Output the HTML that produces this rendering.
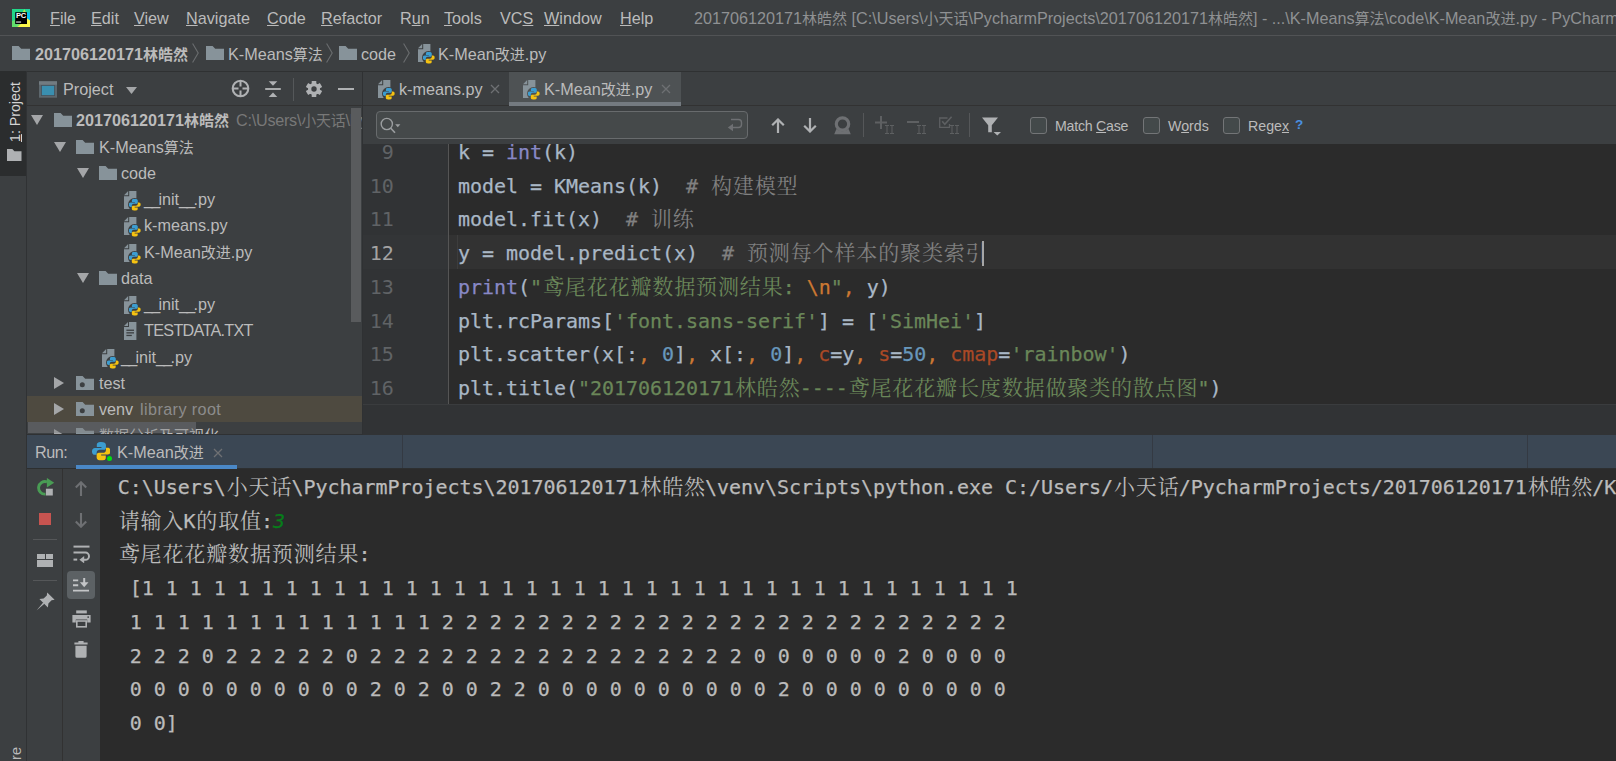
<!DOCTYPE html>
<html lang="zh">
<head>
<meta charset="utf-8">
<title>PyCharm</title>
<style>
*{box-sizing:border-box;margin:0;padding:0}
html,body{width:1616px;height:761px;overflow:hidden;background:#3c3f41}
body{position:relative;font-family:"Liberation Sans","Noto Sans CJK SC",sans-serif;color:#bbbbbb;font-size:15px}
.abs{position:absolute}
.ui{font-family:"Liberation Sans","Noto Sans CJK SC",sans-serif}
.mono{font-family:"DejaVu Sans Mono","Liberation Mono","Noto Serif CJK SC",monospace;letter-spacing:-0.041px;-webkit-text-stroke:0.25px}
.nw{white-space:nowrap}
.c{font-size:15px}
.us{letter-spacing:-1.8px}
.cj{font-size:21px;letter-spacing:0.87px;line-height:1px;position:relative;left:0.9px;-webkit-text-stroke:0}
u{text-decoration:underline;text-underline-offset:1.3px;text-decoration-thickness:1.1px}

/* menu bar */
#menubar{left:0;top:0;width:1616px;height:35px;background:#3c3f41}
#menubar .mi{position:absolute;top:7.8px;font-size:16.2px;color:#bbbbbb;line-height:20px;white-space:nowrap}
#menubar .title{position:absolute;top:7.8px;left:694px;font-size:16.2px;color:#8f9193;line-height:20px;white-space:nowrap}
.hline{position:absolute;left:0;width:1616px;height:1px;background:#515355}

/* nav bar */
#navbar{left:0;top:36px;width:1616px;height:34px;background:#3c3f41}
#navbar .t{position:absolute;top:7.5px;font-size:16.2px;line-height:20px;color:#bbbbbb;white-space:nowrap}

/* left stripe */
#stripe{left:0;top:71px;width:27px;height:690px;background:#3c3f41}
#stripe .tab{position:absolute;left:0;top:0;width:27px;height:104.7px;background:#2b2d2e}

/* project panel */
#proj{left:27px;top:71px;width:335px;height:364px;background:#3c3f41;overflow:hidden}
.row{position:absolute;left:0;width:335px;height:26px;line-height:26px;font-size:16.2px;white-space:nowrap;color:#bbbbbb}
.row span.t{position:absolute;top:0.3px}

/* editor */
#editor{left:363px;top:71px;width:1253px;height:364px;background:#2b2b2b;overflow:hidden}
#tabs{left:0;top:0;width:1253px;height:35px;background:#3c3f41}
#search{left:0;top:35px;width:1253px;height:38px;background:#3c3f41}
.cl{position:absolute;left:95px;height:34px;line-height:34px;font-size:20px;white-space:pre;color:#a9b7c6}
.ln{-webkit-text-stroke:0;position:absolute;left:0;width:30.7px;text-align:right;height:34px;line-height:34px;font-size:20px;color:#606366}
.cm{color:#808080}.st{color:#6a8759}.kw{color:#cc7832}.nu{color:#6897bb}.bi{color:#8888c6}.pa{color:#aa4926}

/* run panel */
#run{left:27px;top:436px;width:1589px;height:325px;background:#2b2b2b}
#runhead{left:0;top:-1px;width:1589px;height:33px;padding-top:1px;background:#3b4754}
.ol{position:absolute;left:90.8px;height:34px;line-height:34px;font-size:20px;white-space:pre;color:#bbbbbb}
</style>
</head>
<body>

<svg width="0" height="0" style="position:absolute">
  <defs>
    <symbol id="folder" viewBox="0 0 18 14"><path d="M0,14V0H6.6L9.2,2.7H18V14Z" fill="#87939a"/></symbol>
    <symbol id="folderdot" viewBox="0 0 18 14"><path d="M0,14V0H6.6L9.2,2.7H18V14Z" fill="#87939a"/><circle cx="6.3" cy="8.7" r="2.5" fill="#3c3f41"/></symbol>
    <symbol id="pylogo" viewBox="0 0 12 12">
      <path d="M5.9,0C3.6,0 3.1,0.9 3.1,2V3.3H6.1V3.9H1.9C0.7,3.9 0,4.8 0,6.1C0,7.4 0.7,8.3 1.9,8.3H3V6.9C3,5.7 3.9,5 5,5H7.6C8.5,5 9,4.4 9,3.5V2C9,0.8 8,0 5.9,0Z" fill="#3c9dd0"/>
      <path d="M6.1,12C8.4,12 8.9,11.1 8.9,10V8.7H5.9V8.1H10.1C11.3,8.1 12,7.2 12,5.9C12,4.6 11.3,3.7 10.1,3.7H9V5.1C9,6.3 8.1,7 7,7H4.4C3.5,7 3,7.6 3,8.5V10C3,11.2 4,12 6.1,12Z" fill="#f5c211"/>
    </symbol>
    <symbol id="pyfile" viewBox="0 0 17 20">
      <path d="M5.2,0H12.4V18H0V5.2H5.2Z" fill="#87939a"/>
      <path d="M0,4.2L4.2,0V4.2Z" fill="#87939a"/>
      <circle cx="10.6" cy="13.6" r="6.6" fill="#3c3f41"/>
      <use href="#pylogo" x="4.8" y="7.7" width="12" height="12"/>
    </symbol>
    <symbol id="pyfile2" viewBox="0 0 17 20">
      <path d="M5.2,0H12.4V18H0V5.2H5.2Z" fill="#87939a"/>
      <path d="M0,4.2L4.2,0V4.2Z" fill="#87939a"/>
      <circle cx="10.6" cy="13.6" r="6.6" fill="#4e5254"/>
      <use href="#pylogo" x="4.8" y="7.7" width="12" height="12"/>
    </symbol>
    <symbol id="txtfile" viewBox="0 0 14 18">
      <path d="M5,0H12.4V18H0V5H5Z" fill="#87939a"/>
      <path d="M0,4L4,0V4Z" fill="#87939a"/>
      <rect x="2.4" y="7.6" width="7.6" height="1.3" fill="#3c3f41"/>
      <rect x="2.4" y="10.2" width="7.6" height="1.3" fill="#3c3f41"/>
      <rect x="2.4" y="12.8" width="5.4" height="1.3" fill="#3c3f41"/>
    </symbol>
    <symbol id="arrd" viewBox="0 0 12 10"><path d="M0,0H12L6,10Z" fill="#a4a6a8"/></symbol>
    <symbol id="arrr" viewBox="0 0 10 12"><path d="M0,0V12L10,6Z" fill="#a4a6a8"/></symbol>
    <symbol id="chev" viewBox="0 0 7 20"><path d="M0.6,0.5L6.2,10L0.6,19.5" fill="none" stroke="#6a6d6f" stroke-width="1.1"/></symbol>
    <symbol id="xx" viewBox="0 0 10 10"><path d="M1,1L9,9M9,1L1,9" stroke="#6e7073" stroke-width="1.3" fill="none"/></symbol>
  </defs>
</svg>

<!-- MENU BAR -->
<div id="menubar" class="abs ui">
  <svg class="abs" style="left:11.9px;top:8.9px" width="18.3" height="18.3" viewBox="0 0 18.3 18.3">
    <defs><linearGradient id="pcg" x1="0" y1="0" x2="1" y2="1"><stop offset="0" stop-color="#21d789"/><stop offset="0.45" stop-color="#21d789"/><stop offset="0.75" stop-color="#c9ef4e"/><stop offset="1" stop-color="#fcf84a"/></linearGradient></defs>
    <rect width="18.3" height="18.3" fill="url(#pcg)"/>
    <polygon points="13.8,0 18.3,0 18.3,4.5 14.6,4" fill="#1fd3a0"/>
    <polygon points="12.3,0.2 10.6,3.2 14,3.2" fill="#b8ee50"/>
    <polygon points="14.4,3.6 18.3,3.6 18.3,12.4 14.4,9.3" fill="#07c3f2"/>
    <polygon points="18.3,11.8 18.3,18.3 5.5,18.3 14.8,9.2" fill="#fcf84a"/>
    <polygon points="0,12 3.2,11 3.2,15.1 5.5,18.3 0,18.3" fill="#62df6b"/>
    <rect x="3.2" y="3.2" width="11.8" height="11.8" fill="#000"/>
    <text x="3.9" y="9.2" font-family="Liberation Sans, sans-serif" font-weight="bold" font-size="7.6" letter-spacing="-0.3" fill="#fff">PC</text>
    <rect x="4.1" y="12.2" width="5" height="1.7" fill="#9a9a9a"/>
  </svg>
  <span class="mi" style="left:50px"><u>F</u>ile</span>
  <span class="mi" style="left:91px"><u>E</u>dit</span>
  <span class="mi" style="left:134px"><u>V</u>iew</span>
  <span class="mi" style="left:186px"><u>N</u>avigate</span>
  <span class="mi" style="left:267px"><u>C</u>ode</span>
  <span class="mi" style="left:321px"><u>R</u>efactor</span>
  <span class="mi" style="left:400px">R<u>u</u>n</span>
  <span class="mi" style="left:444px"><u>T</u>ools</span>
  <span class="mi" style="left:500px">VC<u>S</u></span>
  <span class="mi" style="left:544px"><u>W</u>indow</span>
  <span class="mi" style="left:620px"><u>H</u>elp</span>
  <span class="title">201706120171<span class="c">林皓然</span> [C:\Users\<span class="c">小天话</span>\PycharmProjects\201706120171<span class="c">林皓然</span>] - ...\K-Means<span class="c">算法</span>\code\K-Mean<span class="c">改进</span>.py - PyCharm</span>
</div>
<div class="hline" style="top:35px"></div>

<!-- NAV BAR -->
<div id="navbar" class="abs ui">
  <svg class="abs" style="left:12px;top:10px" width="18" height="14"><use href="#folder"/></svg>
  <span class="t" style="left:35px;font-weight:bold">201706120171<span class="c">林皓然</span></span>
  <svg class="abs" style="left:192px;top:7px" width="7" height="20"><use href="#chev"/></svg>
  <svg class="abs" style="left:206px;top:10px" width="18" height="14"><use href="#folder"/></svg>
  <span class="t" style="left:228px">K-Means<span class="c">算法</span></span>
  <svg class="abs" style="left:326px;top:7px" width="7" height="20"><use href="#chev"/></svg>
  <svg class="abs" style="left:339px;top:10px" width="18" height="14"><use href="#folder"/></svg>
  <span class="t" style="left:361px">code</span>
  <svg class="abs" style="left:403px;top:7px" width="7" height="20"><use href="#chev"/></svg>
  <svg class="abs" style="left:417.8px;top:7.8px" width="17" height="20"><use href="#pyfile"/></svg>
  <span class="t" style="left:438px">K-Mean<span class="c">改进</span>.py</span>
</div>
<div class="hline" style="top:70.6px;left:27px;background:#2f3132;z-index:5"></div>

<!-- LEFT STRIPE -->
<div id="stripe" class="abs ui">
  <div class="tab"></div>
  <div class="abs nw" style="left:5px;top:71px;width:70px;height:20px;line-height:20px;font-size:14.2px;color:#d4d4d4;transform-origin:0 0;transform:rotate(-90deg)"><u>1</u>: Project</div>
  <svg class="abs" style="left:7.2px;top:77.5px" width="14.5" height="12.3" viewBox="0 0 18 14" preserveAspectRatio="none"><path d="M0,14V0H6.6L9.2,2.7H18V14Z" fill="#afb1b3"/></svg>
  <div class="abs nw" style="left:6px;top:751px;width:78px;height:20px;line-height:20px;font-size:14.5px;color:#bbbbbb;transform-origin:0 0;transform:rotate(-90deg)">2: Structure</div>
</div>

<div class="abs" style="left:26px;top:71px;width:1.2px;height:690px;background:#303234;z-index:4"></div>
<!-- PROJECT PANEL -->
<div id="proj" class="abs ui">
  <!-- header -->
  <div class="abs" style="left:0;top:0;width:335px;height:35px;background:#3c3f41;border-bottom:1px solid #323232"></div>
  <svg class="abs" style="left:12px;top:10px" width="18" height="17" viewBox="0 0 18 17"><rect x="0" y="0.3" width="18" height="16.4" fill="#5d676d"/><rect x="0" y="0.3" width="18" height="3.4" fill="#727b81"/><rect x="2.4" y="4.4" width="13.2" height="10.2" fill="#3a8fb0" stroke="#46525a" stroke-width="0.8"/></svg>
  <span class="abs nw" style="left:36px;top:8.3px;font-size:16.2px;line-height:20px;color:#bbbbbb">Project</span>
  <svg class="abs" style="left:98.5px;top:16px" width="11" height="7" viewBox="0 0 11 7"><path d="M0,0H11L5.5,7Z" fill="#a4a6a8"/></svg>
  <!-- locate -->
  <svg class="abs" style="left:203.55px;top:8.30px" width="19" height="19" viewBox="-9.5 -9.5 19 19"><circle r="7.8" fill="none" stroke="#afb1b3" stroke-width="2.1"/><path d="M0,-8V-2M0,2V8M-8,0H-2M2,0H8" stroke="#afb1b3" stroke-width="2"/></svg>
  <!-- collapse all -->
  <svg class="abs" style="left:238.00px;top:8.90px" width="16" height="18" viewBox="-8 -9 16 18"><path d="M-7.8,0H7.8" stroke="#afb1b3" stroke-width="1.9"/><path d="M-4.3,-7.7H4.3L0,-3.3Z" fill="#afb1b3"/><path d="M-4.3,7.9H4.3L0,3.5Z" fill="#afb1b3"/></svg>
  <div class="abs" style="left:266px;top:6.5px;width:1px;height:23.5px;background:#55585a"></div>
  <!-- gear -->
  <svg class="abs" style="left:278.00px;top:8.90px" width="18" height="18" viewBox="-9 -9 18 18"><g fill="#afb1b3"><circle r="6"/><rect x="-2.3" y="-8.1" width="4.6" height="5" rx="0.5" transform="rotate(0)"/><rect x="-2.3" y="-8.1" width="4.6" height="5" rx="0.5" transform="rotate(60)"/><rect x="-2.3" y="-8.1" width="4.6" height="5" rx="0.5" transform="rotate(120)"/><rect x="-2.3" y="-8.1" width="4.6" height="5" rx="0.5" transform="rotate(180)"/><rect x="-2.3" y="-8.1" width="4.6" height="5" rx="0.5" transform="rotate(240)"/><rect x="-2.3" y="-8.1" width="4.6" height="5" rx="0.5" transform="rotate(300)"/></g><circle r="2.7" fill="#3c3f41"/></svg>
  <!-- minimize -->
  <div class="abs" style="left:311.4px;top:17px;width:15.3px;height:1.9px;background:#afb1b3"></div>
  <!-- tree -->
  <div class="abs" style="left:0;top:36px;width:335px;height:328px;overflow:hidden">
  <div class="abs" style="left:0;top:-36px;width:335px;height:400px">
<div class="row" style="top:36px"><svg class="abs" style="left:4px;top:8px" width="12" height="10"><use href="#arrd"/></svg><svg class="abs" style="left:27px;top:6px" width="18" height="14"><use href="#folder"/></svg><span class="t" style="left:49px;font-weight:bold">201706120171<span class="c">林皓然</span></span><span class="t" style="left:209px;color:#787878;letter-spacing:-0.25px">C:\Users\<span class="c">小天话</span>\PycharmProjects\201706120171<span class="c">林皓然</span></span></div>
<div class="row" style="top:63px"><svg class="abs" style="left:27px;top:8px" width="12" height="10"><use href="#arrd"/></svg><svg class="abs" style="left:49px;top:6px" width="18" height="14"><use href="#folder"/></svg><span class="t" style="left:72px">K-Means<span class="c">算法</span></span></div>
<div class="row" style="top:89px"><svg class="abs" style="left:50px;top:8px" width="12" height="10"><use href="#arrd"/></svg><svg class="abs" style="left:72px;top:6px" width="18" height="14"><use href="#folder"/></svg><span class="t" style="left:94px">code</span></div>
<div class="row" style="top:115px"><svg class="abs" style="left:96.8px;top:4.8px" width="17" height="20"><use href="#pyfile"/></svg><span class="t" style="left:117px"><span class="us">__</span>init<span class="us">__</span>.py</span></div>
<div class="row" style="top:141px"><svg class="abs" style="left:96.8px;top:4.8px" width="17" height="20"><use href="#pyfile"/></svg><span class="t" style="left:117px">k-means.py</span></div>
<div class="row" style="top:168px"><svg class="abs" style="left:96.8px;top:4.8px" width="17" height="20"><use href="#pyfile"/></svg><span class="t" style="left:117px">K-Mean<span class="c">改进</span>.py</span></div>
<div class="row" style="top:194px"><svg class="abs" style="left:50px;top:8px" width="12" height="10"><use href="#arrd"/></svg><svg class="abs" style="left:72px;top:6px" width="18" height="14"><use href="#folder"/></svg><span class="t" style="left:94px">data</span></div>
<div class="row" style="top:220px"><svg class="abs" style="left:96.8px;top:4.8px" width="17" height="20"><use href="#pyfile"/></svg><span class="t" style="left:117px"><span class="us">__</span>init<span class="us">__</span>.py</span></div>
<div class="row" style="top:246px"><svg class="abs" style="left:97px;top:5px" width="14" height="18"><use href="#txtfile"/></svg><span class="t" style="left:117px;letter-spacing:-0.7px">TESTDATA.TXT</span></div>
<div class="row" style="top:273px"><svg class="abs" style="left:74.8px;top:4.8px" width="17" height="20"><use href="#pyfile"/></svg><span class="t" style="left:94px"><span class="us">__</span>init<span class="us">__</span>.py</span></div>
<div class="row" style="top:299px"><svg class="abs" style="left:27px;top:7px" width="10" height="12"><use href="#arrr"/></svg><svg class="abs" style="left:49px;top:6px" width="18" height="14"><use href="#folderdot"/></svg><span class="t" style="left:72px">test</span></div>
<div class="row" style="top:325px;background:#4e4a40"><svg class="abs" style="left:27px;top:7px" width="10" height="12"><use href="#arrr"/></svg><svg class="abs" style="left:49px;top:6px" width="18" height="14"><use href="#folderdot"/></svg><span class="t" style="left:72px">venv</span><span class="t" style="left:113px;color:#8c8c8c;letter-spacing:0.4px">library root</span></div>
<div class="row" style="top:351px"><svg class="abs" style="left:27px;top:7px" width="10" height="12"><use href="#arrr"/></svg><svg class="abs" style="left:49px;top:6px" width="18" height="14"><use href="#folder"/></svg><span class="t" style="left:72px"><span class="c">数据分析及可视化</span></span></div>
  </div>
  <!-- h scrollbar -->
    <div class="abs" style="left:1px;top:315px;width:168px;height:11px;background:rgba(128,130,132,0.43)"></div>
  <!-- v scrollbar -->
  <div class="abs" style="left:324px;top:1px;width:10px;height:214px;background:#595b5d"></div>
  </div>
</div>

<!-- EDITOR -->
<div id="editor" class="abs">
  <div class="abs" style="left:0;top:73px;width:86px;height:291px;background:#313335"></div>
  <div class="abs" style="left:86px;top:164px;width:1167px;height:33.7px;background:#323232"></div>
  <div class="abs" style="left:0;top:164px;width:86px;height:33.7px;background:#333537"></div>
  <div class="abs" style="left:94px;top:164px;width:1px;height:33.7px;background:#3d3d3d"></div>
  <div class="abs" style="left:85px;top:73px;width:1px;height:262px;background:#555555"></div>
  <div class="ln mono" style="top:64.00px;color:#606366">9</div>
  <div class="cl mono" style="top:64.00px;left:47px">    k = <span class="bi">int</span>(k)</div>
  <div class="ln mono" style="top:97.71px;color:#606366">10</div>
  <div class="cl mono" style="top:97.71px;left:47px">    model = KMeans(k)  <span class="cm"># <span class="cj">构建模型</span></span></div>
  <div class="ln mono" style="top:131.42px;color:#606366">11</div>
  <div class="cl mono" style="top:131.42px;left:47px">    model.fit(x)  <span class="cm"># <span class="cj">训练</span></span></div>
  <div class="ln mono" style="top:165.13px;color:#a4a3a3">12</div>
  <div class="cl mono" style="top:165.13px;left:47px">    y = model.predict(x)  <span class="cm"># <span class="cj">预测每个样本的聚类索引</span></span></div>
  <div class="ln mono" style="top:198.84px;color:#606366">13</div>
  <div class="cl mono" style="top:198.84px;left:47px">    <span class="bi">print</span>(<span class="st">"<span class="cj">鸢尾花花瓣数据预测结果</span>: </span><span class="kw">\n</span><span class="st">"</span><span class="kw">,</span> y)</div>
  <div class="ln mono" style="top:232.55px;color:#606366">14</div>
  <div class="cl mono" style="top:232.55px;left:47px">    plt.rcParams[<span class="st">'font.sans-serif'</span>] = [<span class="st">'SimHei'</span>]</div>
  <div class="ln mono" style="top:266.26px;color:#606366">15</div>
  <div class="cl mono" style="top:266.26px;left:47px">    plt.scatter(x[:<span class="kw">,</span> <span class="nu">0</span>]<span class="kw">,</span> x[:<span class="kw">,</span> <span class="nu">0</span>]<span class="kw">,</span> <span class="pa">c</span>=y<span class="kw">,</span> <span class="pa">s</span>=<span class="nu">50</span><span class="kw">,</span> <span class="pa">cmap</span>=<span class="st">'rainbow'</span>)</div>
  <div class="ln mono" style="top:299.97px;color:#606366">16</div>
  <div class="cl mono" style="top:299.97px;left:47px">    plt.title(<span class="st">"201706120171<span class="cj">林皓然</span>----<span class="cj">鸢尾花花瓣长度数据做聚类的散点图</span>"</span>)</div>
  <div class="abs" style="left:619.3px;top:170.13px;width:1.4px;height:25px;background:#a6a6a6"></div>
  <div class="abs" style="left:0;top:332.7px;width:1253px;height:32px;background:#313335;border-top:1px solid #3a3c3e"></div>
  <div id="tabs" class="abs ui">
    <div class="abs" style="left:0;top:34px;width:1253px;height:1px;background:#323232"></div>
    <svg class="abs" style="left:14.8px;top:8.8px" width="17" height="20"><use href="#pyfile"/></svg>
    <span class="abs nw" style="left:36px;top:8px;font-size:16.2px;line-height:20px;color:#bbbbbb">k-means.py</span>
    <svg class="abs" style="left:127px;top:13px" width="10" height="10"><use href="#xx"/></svg>
    <div class="abs" style="left:146px;top:1px;width:172px;height:33px;background:#4e5254"></div>
    <div class="abs" style="left:146px;top:31px;width:172px;height:4px;background:#747a80"></div>
    <svg class="abs" style="left:159.8px;top:8.8px" width="17" height="20"><use href="#pyfile2"/></svg>
    <span class="abs nw" style="left:181px;top:8px;font-size:16.2px;line-height:20px;color:#bbbbbb">K-Mean<span class="c">改进</span>.py</span>
    <svg class="abs" style="left:298px;top:13px" width="10" height="10"><use href="#xx"/></svg>
  </div>
  <div id="search" class="abs ui">
    <div class="abs" style="left:13px;top:5px;width:372px;height:28px;border:1.5px solid #686b6d;border-radius:4px;background:#45494a"></div>
    <svg class="abs" style="left:17px;top:11px" width="21" height="18" viewBox="0 0 21 18"><circle cx="6.8" cy="7" r="5.6" fill="none" stroke="#9b9ea0" stroke-width="1.4"/><path d="M10.8,11.2L15,15.8" stroke="#9b9ea0" stroke-width="1.6"/><path d="M15.2,7.3H20.4L17.8,10.2Z" fill="#9b9ea0"/></svg>
    <svg class="abs" style="left:364px;top:12px" width="16" height="15" viewBox="0 0 16 15"><path d="M4,1.5H11.5A3,3 0 0 1 14.5,4.5V6.5A3,3 0 0 1 11.5,9.5H5" fill="none" stroke="#6e7073" stroke-width="1.4"/><path d="M0.8,9.5L6,5.8V13.2Z" fill="#6e7073"/></svg>
    <!-- up / down -->
    <svg class="abs" style="left:408px;top:12px" width="14" height="15" viewBox="0 0 14 15"><path d="M7,1.5V15M1.2,7.3L7,1.5L12.8,7.3" fill="none" stroke="#afb1b3" stroke-width="2.2"/></svg>
    <svg class="abs" style="left:440px;top:12px" width="14" height="15" viewBox="0 0 14 15"><path d="M7,0V13.5M1.2,7.7L7,13.5L12.8,7.7" fill="none" stroke="#afb1b3" stroke-width="2.2"/></svg>
    <!-- find all (disabled) -->
    <svg class="abs" style="left:470px;top:10px" width="19" height="19" viewBox="0 0 19 19"><circle cx="9.5" cy="8" r="6.2" fill="none" stroke="#6e7073" stroke-width="3.2"/><path d="M3.4,13L1.2,18.3H17.8L15.6,13Q9.5,17.5 3.4,13Z" fill="#6e7073"/></svg>
    <div class="abs" style="left:500px;top:7px;width:1px;height:24px;background:#555759"></div>
    <!-- +II -->
    <svg class="abs" style="left:512px;top:10px" width="12" height="13" viewBox="0 0 12 13"><path d="M6,0V13M0,6.5H12" stroke="#5e6062" stroke-width="2" fill="none"/></svg>
    <svg class="abs" style="left:522px;top:19px" width="9" height="9" viewBox="0 0 9 9"><path d="M0,0.5H4M0,8.5H4M2,0.5V8.5M5,0.5H9M5,8.5H9M7,0.5V8.5" stroke="#5e6062" stroke-width="1" fill="none"/></svg>
    <!-- -II -->
    <div class="abs" style="left:544px;top:15px;width:12px;height:2px;background:#5e6062"></div>
    <svg class="abs" style="left:554px;top:19px" width="9" height="9" viewBox="0 0 9 9"><path d="M0,0.5H4M0,8.5H4M2,0.5V8.5M5,0.5H9M5,8.5H9M7,0.5V8.5" stroke="#5e6062" stroke-width="1" fill="none"/></svg>
    <!-- check II -->
    <svg class="abs" style="left:576px;top:10px" width="14" height="12" viewBox="0 0 14 12"><path d="M8.5,2H0.7V11.3H10.5V8" fill="none" stroke="#5e6062" stroke-width="1.3"/><path d="M3.2,5.2L5.8,8.2L12.6,0.8" fill="none" stroke="#5e6062" stroke-width="1.6"/></svg>
    <svg class="abs" style="left:587px;top:19px" width="9" height="9" viewBox="0 0 9 9"><path d="M0,0.5H4M0,8.5H4M2,0.5V8.5M5,0.5H9M5,8.5H9M7,0.5V8.5" stroke="#5e6062" stroke-width="1" fill="none"/></svg>
    <div class="abs" style="left:606px;top:7px;width:1px;height:24px;background:#555759"></div>
    <!-- filter -->
    <svg class="abs" style="left:619px;top:11px" width="20" height="19" viewBox="0 0 20 19"><path d="M0,0.5H16L9.8,8.3V15.2H6.2V8.3Z" fill="#afb1b3"/><path d="M11.6,15H19L15.3,18.6Z" fill="#afb1b3"/></svg>
    <div class="abs" style="left:667px;top:11px;width:17px;height:17px;border:1px solid #737577;border-radius:3px;background:#43494a"></div>
    <span class="abs nw" style="left:692px;top:10px;font-size:14.2px;letter-spacing:-0.25px;line-height:20px;color:#bbbbbb">Match <u>C</u>ase</span>
    <div class="abs" style="left:780px;top:11px;width:17px;height:17px;border:1px solid #737577;border-radius:3px;background:#43494a"></div>
    <span class="abs nw" style="left:805px;top:10px;font-size:14.2px;line-height:20px;color:#bbbbbb">W<u>o</u>rds</span>
    <div class="abs" style="left:860px;top:11px;width:17px;height:17px;border:1px solid #737577;border-radius:3px;background:#43494a"></div>
    <span class="abs nw" style="left:885px;top:10px;font-size:14.2px;line-height:20px;color:#bbbbbb">Rege<u>x</u></span>
    <span class="abs nw" style="left:932px;top:9px;font-size:13.5px;line-height:20px;color:#4a8fe0;font-weight:bold">?</span>
  </div>
</div>

<div class="abs" style="left:27px;top:433.5px;width:336px;height:1.2px;background:#2f3133"></div>
<div class="abs" style="left:362px;top:71px;width:1.3px;height:364px;background:#2f3133"></div>
<!-- RUN PANEL -->
<div id="run" class="abs">
  <div id="runhead" class="abs ui">
    <span class="abs nw" style="left:8px;top:7.1px;font-size:16.2px;letter-spacing:-0.5px;line-height:20px;color:#bbbbbb">Run:</span>
    <svg class="abs" style="left:64.6px;top:7.0px" width="18.6" height="18.6" viewBox="0 0 12 12"><use href="#pylogo" width="12" height="12"/></svg>
    <div class="abs" style="left:79px;top:20.0px;width:7px;height:7px;border-radius:50%;background:#3b4754"></div>
    <div class="abs" style="left:80px;top:21.0px;width:5px;height:5px;border-radius:50%;background:#00e010"></div>
    <span class="abs nw" style="left:90px;top:7.1px;font-size:16.2px;line-height:20px;color:#bbbbbb">K-Mean<span class="c">改进</span></span>
    <svg class="abs" style="left:186px;top:13.0px" width="10" height="10"><use href="#xx"/></svg>
    <div class="abs" style="left:0;top:32.7px;width:1589px;height:1px;background:#2d2f30;z-index:3"></div>
    <div class="abs" style="left:49px;top:29.9px;width:161px;height:3.7px;background:#4a88c7;z-index:4"></div>
    <div class="abs" style="left:375px;top:0;width:1px;height:33px;background:#343a43"></div>
    <div class="abs" style="left:1125px;top:0;width:1px;height:33px;background:#343a43"></div>
    <div class="abs" style="left:1500px;top:0;width:1px;height:33px;background:#343a43"></div>
  </div>
  <div class="abs" style="left:0;top:32px;width:73px;height:293px;background:#3c3f41"></div>
  <div class="abs" style="left:35px;top:32px;width:1px;height:293px;background:#323232"></div>
  <!-- rerun -->
  <svg class="abs" style="left:10px;top:41.5px" width="18" height="18" viewBox="0 0 18 18"><path d="M10.05,3.9A6.3,6.3 0 1 0 8.45,16.1" fill="none" stroke="#499c54" stroke-width="2.9"/><path d="M9.85,-0.1L17.2,4.7L9.85,9.5Z" fill="#499c54"/><rect x="8.9" y="10.7" width="6.9" height="6.8" fill="#afb1b3"/></svg>
  <!-- stop -->
  <div class="abs" style="left:11.8px;top:77.2px;width:12.5px;height:12px;background:#c75450"></div>
  <div class="abs" style="left:6.4px;top:103px;width:23.4px;height:1px;background:#555759"></div>
  <!-- layout -->
  <div class="abs" style="left:10.3px;top:117.6px;width:7.3px;height:5.8px;background:#afb1b3"></div>
  <div class="abs" style="left:18.5px;top:117.6px;width:7.3px;height:5.8px;background:#afb1b3"></div>
  <div class="abs" style="left:10.3px;top:124.4px;width:15.5px;height:6.2px;background:#afb1b3"></div>
  <div class="abs" style="left:6.4px;top:144px;width:23.4px;height:1px;background:#555759"></div>
  <!-- pin -->
  <svg class="abs" style="left:8.5px;top:156px" width="19" height="19" viewBox="0 0 19 19"><path d="M11.2,0.4L18.6,7.8L15.6,8.2L12.4,11.4L11.9,15.6L3.4,7.1L7.6,6.6L10.8,3.4Z" fill="#afb1b3"/><path d="M0.5,18.5L7.2,10.6L8.4,11.8Z" fill="#afb1b3"/></svg>
  <!-- up / down disabled -->
  <svg class="abs" style="left:48px;top:45px" width="12" height="15" viewBox="0 0 12 15"><path d="M6,1.3V15M0.8,6.5L6,1.3L11.2,6.5" fill="none" stroke="#6e7073" stroke-width="2.1"/></svg>
  <svg class="abs" style="left:48px;top:76.5px" width="12" height="15" viewBox="0 0 12 15"><path d="M6,0V13.7M0.8,8.5L6,13.7L11.2,8.5" fill="none" stroke="#6e7073" stroke-width="2.1"/></svg>
  <!-- soft wrap -->
  <svg class="abs" style="left:45.5px;top:109px" width="18" height="18" viewBox="0 0 18 18"><path d="M0.5,1.6H16.5" stroke="#afb1b3" stroke-width="2" fill="none"/><path d="M0.5,7.6H12.4A3.6,3.6 0 0 1 12.4,14.8H10.5" stroke="#afb1b3" stroke-width="2" fill="none"/><path d="M6.4,14.8L11.2,11V18.4Z" fill="#afb1b3"/><path d="M0.5,14.6H4.2" stroke="#afb1b3" stroke-width="2" fill="none"/></svg>
  <!-- scroll to end (selected) -->
  <div class="abs" style="left:40.3px;top:135px;width:27.6px;height:28px;border-radius:4px;background:#5c6164"></div>
  <svg class="abs" style="left:46px;top:142px" width="16" height="14" viewBox="0 0 16 14"><path d="M0,2.4H5.2M0,7.2H5.2M0,12.6H16" stroke="#c3c5c7" stroke-width="1.9" fill="none"/><path d="M11.2,0V5" stroke="#c3c5c7" stroke-width="2" fill="none"/><path d="M6.9,4.2H15.5L11.2,9.2Z" fill="#c3c5c7"/></svg>
  <!-- print -->
  <svg class="abs" style="left:44.5px;top:173.5px" width="19" height="18" viewBox="0 0 19 18"><rect x="4.2" y="0.4" width="10.6" height="3" fill="#afb1b3"/><path d="M0.4,5H18.6V12.6H15.2V9.6H3.8V12.6H0.4Z" fill="#afb1b3"/><rect x="4.8" y="11" width="9.4" height="5.8" fill="none" stroke="#afb1b3" stroke-width="1.6"/><rect x="15.4" y="6.4" width="1.6" height="1.4" fill="#3c3f41"/></svg>
  <!-- trash -->
  <svg class="abs" style="left:47px;top:205px" width="14" height="17" viewBox="0 0 14 17"><path d="M4.4,0H9.6V1.4H13.6V3.6H0.4V1.4H4.4Z" fill="#afb1b3"/><path d="M1.4,4.8H12.6V15.2A1.6,1.6 0 0 1 11,16.8H3A1.6,1.6 0 0 1 1.4,15.2Z" fill="#afb1b3"/></svg>
  <div class="abs" style="left:73px;top:32px;width:1516px;height:293px;overflow:hidden">
  <div class="abs" style="left:-73px;top:-32px;width:1700px;height:325px">
  <div class="ol mono" style="top:34.00px">C:\Users\<span class="cj">小天话</span>\PycharmProjects\201706120171<span class="cj">林皓然</span>\venv\Scripts\python.exe C:/Users/<span class="cj">小天话</span>/PycharmProjects/201706120171<span class="cj">林皓然</span>/K-Means<span class="cj">算法</span>/code/K-Mean<span class="cj">改进</span>.py</div>
  <div class="ol mono" style="top:67.71px"><span class="cj">请输入</span>K<span class="cj">的取值</span>:<span style="color:#077d1a;font-style:italic">3</span></div>
  <div class="ol mono" style="top:101.42px"><span class="cj">鸢尾花花瓣数据预测结果</span>:</div>
  <div class="ol mono" style="top:135.13px"> [1 1 1 1 1 1 1 1 1 1 1 1 1 1 1 1 1 1 1 1 1 1 1 1 1 1 1 1 1 1 1 1 1 1 1 1 1</div>
  <div class="ol mono" style="top:168.84px"> 1 1 1 1 1 1 1 1 1 1 1 1 1 2 2 2 2 2 2 2 2 2 2 2 2 2 2 2 2 2 2 2 2 2 2 2 2</div>
  <div class="ol mono" style="top:202.55px"> 2 2 2 0 2 2 2 2 2 0 2 2 2 2 2 2 2 2 2 2 2 2 2 2 2 2 0 0 0 0 0 0 2 0 0 0 0</div>
  <div class="ol mono" style="top:236.26px"> 0 0 0 0 0 0 0 0 0 0 2 0 2 0 0 2 2 0 0 0 0 0 0 0 0 0 0 2 0 0 0 0 0 0 0 0 0</div>
  <div class="ol mono" style="top:269.97px"> 0 0]</div>
  </div></div>
</div>

</body>
</html>
